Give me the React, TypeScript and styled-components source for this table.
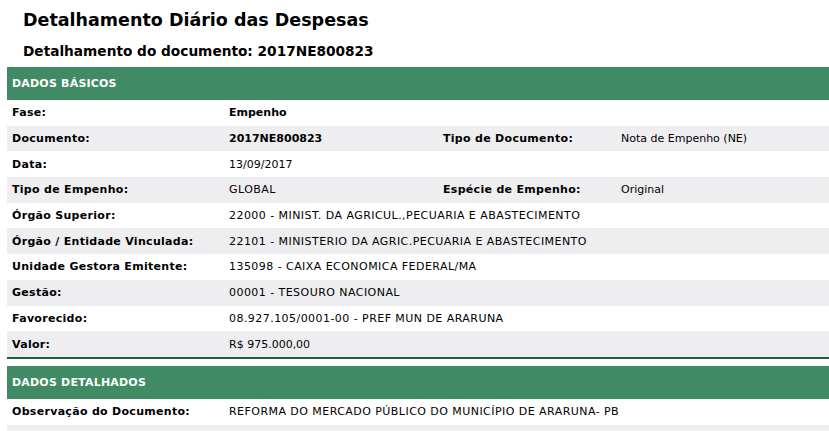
import React from "react";
import styled, { createGlobalStyle } from "styled-components";

const Global = createGlobalStyle`
  html, body { margin: 0; padding: 0; background: #fff; }
  body { font-family: "DejaVu Sans", Verdana, sans-serif; color: #000; overflow: hidden; }
`;

const Page = styled.div`
  width: 829px;
  padding: 0 0 0 7px;
  box-sizing: border-box;
`;

const Title = styled.h1`
  margin: 0;
  padding: 9px 0 0 16px;
  font-size: 17.5px;
  line-height: 22px;
  font-weight: bold;
`;

const Subtitle = styled.h2`
  margin: 0;
  padding: 11px 0 0 16px;
  font-size: 13.7px;
  line-height: 19px;
  font-weight: bold;
`;

const Section = styled.section<{ $top: number }>`
  margin-top: ${(p) => p.$top}px;
`;

const SectionHeader = styled.div`
  height: 33px;
  display: flex;
  align-items: center;
  padding-left: 5px;
  background: #408b66;
  color: #fff;
  font-size: 11px;
  font-weight: bold;
  letter-spacing: 0.2px;
`;

const Row = styled.div<{ $alt: boolean }>`
  display: grid;
  grid-template-columns: 216px 215px 177px 1fr;
  height: 25.7px;
  align-items: center;
  background: ${(p) => (p.$alt ? "#eeeef0" : "#fff")};
  font-size: 11px;
`;

const Label = styled.div`
  padding-left: 5px;
  font-weight: bold;
  letter-spacing: 0.3px;
  white-space: nowrap;
`;

const Value = styled.div<{ $bold?: boolean; $caps?: boolean }>`
  padding-left: 6px;
  font-weight: ${(p) => (p.$bold ? "bold" : "normal")};
  letter-spacing: ${(p) => (p.$caps ? "0.45px" : "0")};
  white-space: nowrap;
`;

const Divider = styled.div`
  height: 2px;
  background: #1f5f3d;
`;

type Item = { l: string; v: string; bold?: boolean; l2?: string; v2?: string };

const basic: Item[] = [
  { l: "Fase:", v: "Empenho", bold: true },
  { l: "Documento:", v: "2017NE800823", bold: true, l2: "Tipo de Documento:", v2: "Nota de Empenho (NE)" },
  { l: "Data:", v: "13/09/2017" },
  { l: "Tipo de Empenho:", v: "GLOBAL", l2: "Espécie de Empenho:", v2: "Original" },
  { l: "Órgão Superior:", v: "22000 - MINIST. DA AGRICUL.,PECUARIA E ABASTECIMENTO" },
  { l: "Órgão / Entidade Vinculada:", v: "22101 - MINISTERIO DA AGRIC.PECUARIA E ABASTECIMENTO" },
  { l: "Unidade Gestora Emitente:", v: "135098 - CAIXA ECONOMICA FEDERAL/MA" },
  { l: "Gestão:", v: "00001 - TESOURO NACIONAL" },
  { l: "Favorecido:", v: "08.927.105/0001-00 - PREF MUN DE ARARUNA" },
  { l: "Valor:", v: "R$ 975.000,00" },
];

const detailed: Item[] = [
  { l: "Observação do Documento:", v: "REFORMA DO MERCADO PÚBLICO DO MUNICÍPIO DE ARARUNA- PB" },
  { l: "", v: "" },
];

const isCaps = (s: string) => /[A-Z]{4}/.test(s) && s === s.toUpperCase();

const Rows = ({ items }: { items: Item[] }) => (
  <>
    {items.map((it, i) => (
      <Row key={i} $alt={i % 2 === 1}>
        <Label>{it.l}</Label>
        <Value $bold={it.bold} $caps={!it.bold && isCaps(it.v)}>{it.v}</Value>
        <Label>{it.l2 ?? ""}</Label>
        <Value>{it.v2 ?? ""}</Value>
      </Row>
    ))}
  </>
);

export default function App() {
  return (
    <Page>
      <Global />
      <Title>Detalhamento Diário das Despesas</Title>
      <Subtitle>Detalhamento do documento: 2017NE800823</Subtitle>
      <Section $top={6}>
        <SectionHeader>DADOS BÁSICOS</SectionHeader>
        <Rows items={basic} />
        <Divider />
      </Section>
      <Section $top={7}>
        <SectionHeader>DADOS DETALHADOS</SectionHeader>
        <Rows items={detailed} />
      </Section>
    </Page>
  );
}
